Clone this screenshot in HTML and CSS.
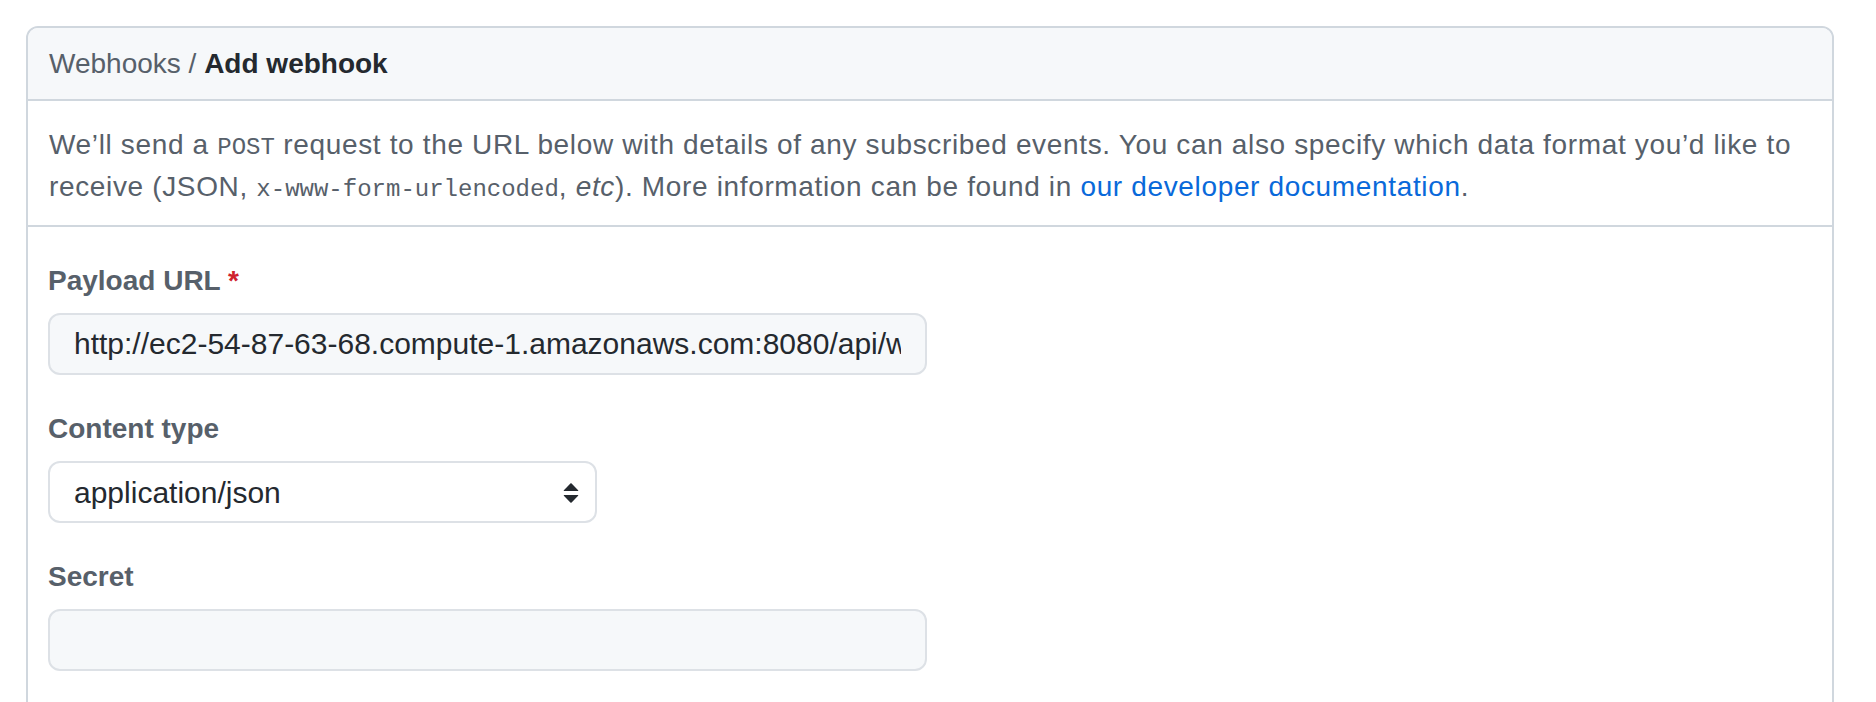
FILE: index.html
```html
<!DOCTYPE html>
<html lang="en">
<head>
<meta charset="utf-8">
<title>Add webhook</title>
<link rel="stylesheet" href="styles.css">
</head>
<body>
<div class="box">
  <div class="box-header">
    <span class="crumb">Webhooks</span> / <strong class="current">Add webhook</strong>
  </div>
  <div class="box-desc">
    <p>We’ll send a <code>POST</code> request to the URL below with details of any subscribed events. You can also specify which data format you’d like to receive (JSON, <code>x-www-form-urlencoded</code>, <em>etc</em>). More information can be found in <a href="#">our developer documentation</a>.</p>
  </div>
  <form class="box-body">
    <div class="form-group">
      <label class="form-label" for="url">Payload URL <span class="req">*</span></label>
      <input class="form-control input-wide" id="url" type="text" value="http://ec2-54-87-63-68.compute-1.amazonaws.com:8080/api/webhooks/github">
    </div>
    <div class="form-group">
      <label class="form-label" for="ctype">Content type</label>
      <div class="select-wrap">
        <select class="form-control form-select" id="ctype">
          <option>application/json</option>
          <option>application/x-www-form-urlencoded</option>
        </select>
        <svg class="select-arrows" width="32" height="32" viewBox="0 0 16 16" aria-hidden="true"><path d="M4.427 9.427l3.396 3.396a.25.25 0 00.354 0l3.396-3.396A.25.25 0 0011.396 9H4.604a.25.25 0 00-.177.427zM4.427 6.573l3.396-3.396a.25.25 0 01.354 0l3.396 3.396a.25.25 0 01-.177.427H4.604a.25.25 0 01-.177-.427z"/></svg>
      </div>
    </div>
    <div class="form-group">
      <label class="form-label" for="secret">Secret</label>
      <input class="form-control input-wide" id="secret" type="password" value="">
    </div>
  </form>
</div>
</body>
</html>
```
FILE: styles.css
```css
html, body {
  margin: 0;
  padding: 0;
  background: #ffffff;
  overflow: hidden;
}

body {
  font-family: "Liberation Sans", Arial, sans-serif;
  font-size: 28px;
  color: #24292f;
}

.box {
  margin: 26px 42px 0 26px;
  border: 2px solid #d0d7de;
  border-radius: 12px;
  min-height: 900px;
}

.box-header {
  background: #f6f8fa;
  border-bottom: 2px solid #d0d7de;
  border-radius: 10px 10px 0 0;
  padding: 15px 21px 14px;
  line-height: 42px;
  color: #57606a;
}

.current {
  color: #24292f;
  font-weight: 700;
}

.box-desc {
  border-bottom: 2px solid #d0d7de;
  padding: 23px 21px 17px;
}

.box-desc p {
  margin: 0;
  line-height: 42px;
  letter-spacing: 0.65px;
  color: #57606a;
}

.box-desc code {
  font-family: "Liberation Mono", "DejaVu Sans Mono", monospace;
  font-size: 24px;
  line-height: 1;
  letter-spacing: 0;
}

.box-desc a {
  color: #0969da;
  text-decoration: none;
}

.box-body {
  padding: 33px 20px 0;
}

.form-group {
  margin-bottom: 33px;
}

.form-label {
  display: block;
  font-weight: 700;
  line-height: 42px;
  margin-bottom: 11px;
  color: #57606a;
}

.req {
  color: #cf222e;
}

.form-control {
  display: block;
  box-sizing: border-box;
  height: 62px;
  border: 2px solid #dde1e6;
  border-radius: 12px;
  background: #f6f8fa;
  padding: 0 24px;
  font-family: "Liberation Sans", Arial, sans-serif;
  font-size: 30px;
  color: #24292f;
  outline: none;
}

.input-wide {
  width: 879px;
}

.select-wrap {
  position: relative;
  width: 549px;
}

.form-select {
  width: 549px;
  background: #ffffff;
  appearance: none;
  -webkit-appearance: none;
}

.select-arrows {
  position: absolute;
  right: 10px;
  top: 16px;
  fill: #24292f;
  pointer-events: none;
}
```
